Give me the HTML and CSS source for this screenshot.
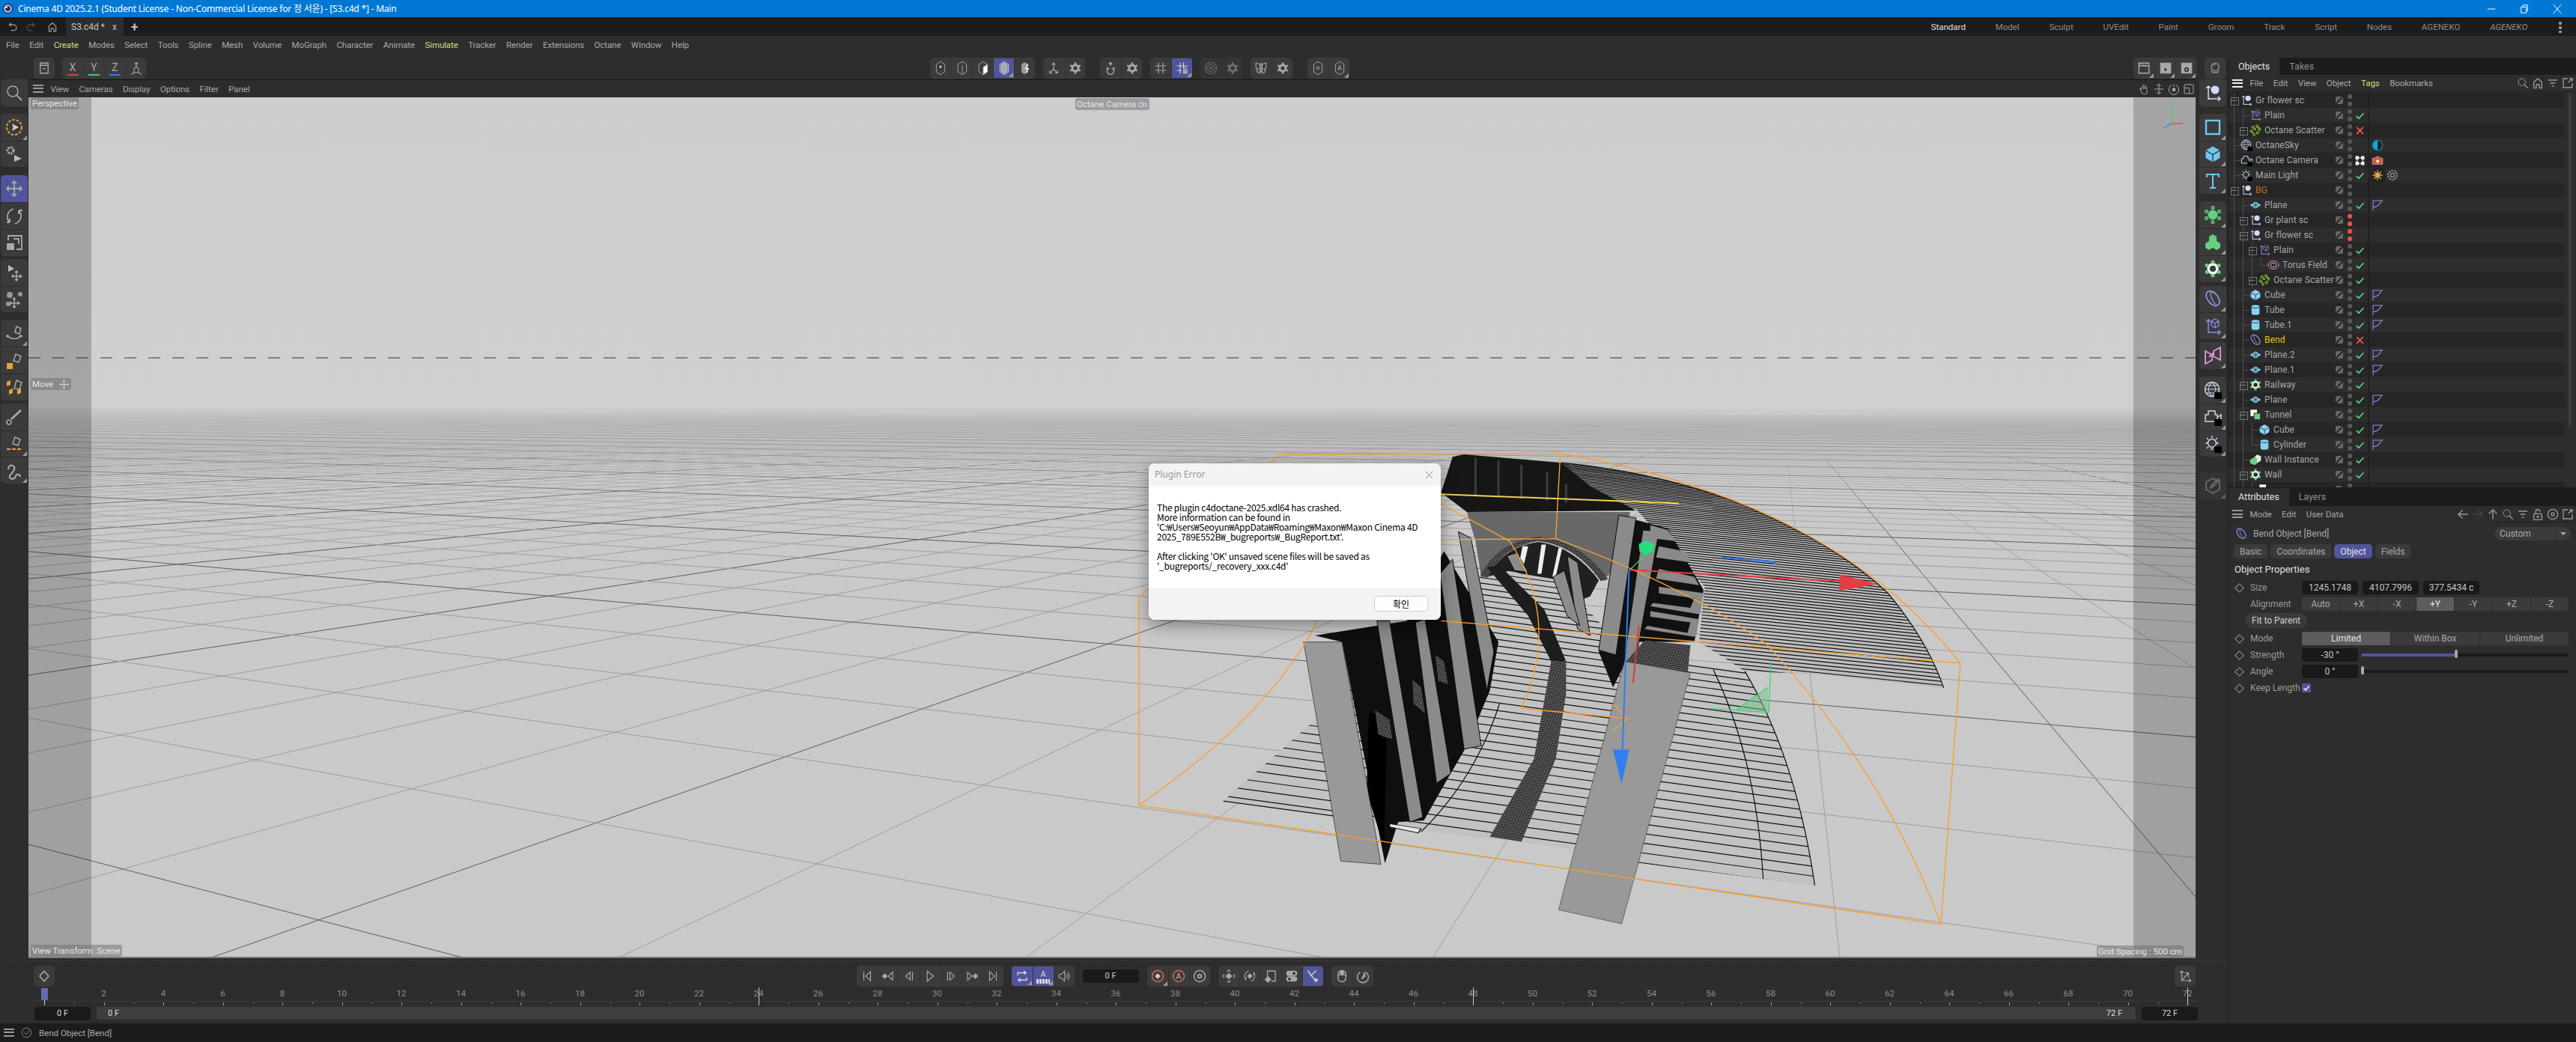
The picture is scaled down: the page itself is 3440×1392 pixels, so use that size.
FILE: index.html
```html
<!DOCTYPE html>
<html lang="en">
<head>
<meta charset="utf-8">
<title>Cinema 4D</title>
<link rel="stylesheet" href="styles.css">
</head>
<body>
<svg class="defs" width="0" height="0" aria-hidden="true">
  <symbol id="null" viewBox="0 0 24 24"><path d="M6 21V3M3 6l3-3 3 3M6 20h16M19 17l3 3-3 3"/><circle cx="15" cy="8" r="5.5" fill="currentColor" stroke="none"/></symbol>
  <symbol id="nullc" viewBox="0 0 24 24"><path d="M6 21V3M3 6l3-3 3 3M6 20h16M19 17l3 3-3 3"/><path d="M15 2l5 3v6l-5 3-5-3V5zM10 5l5 3 5-3M15 8v6" stroke-width="1.2"/></symbol>
  <symbol id="cube" viewBox="0 0 24 24"><path d="M12 1.5l9.5 5.5v10L12 22.5 2.500 17V7z" fill="currentColor" stroke="none"/><path d="M2.500 7L12 12.500 21.500 7M12 12.500V22.500" stroke="#2a2a2a" stroke-width="1.300"/></symbol>
  <symbol id="tube" viewBox="0 0 24 24"><path d="M4 5c0-4 16-4 16 0v14c0 4-16 4-16 0z" fill="currentColor" stroke="none"/><path d="M4 6c2 3 14 3 16 0" stroke="#2a2a2a" stroke-width="1.300"/></symbol>
  <symbol id="plane" viewBox="0 0 24 24"><path d="M12 5L23 12 12 19 1 12z" fill="currentColor" stroke="none"/><path d="M6 9l12 6M18 9L6 15M12 5v14" stroke="#2a2a2a" stroke-width="1.100"/></symbol>
  <symbol id="bend" viewBox="0 0 24 24"><path d="M9 2c6 1 11 7 12 13 1 4-4 8-8 6C8 19 3 12 3 7c0-3 3-6 6-5z" stroke-width="1.800"/><path d="M9 2c-1 5 2 13 7 18" stroke-width="1.400"/></symbol>
  <symbol id="cloner" viewBox="0 0 24 24"><circle cx="12" cy="12" r="6" fill="none" stroke="#fff" stroke-width="3.400"/><g fill="currentColor" stroke="none"><circle cx="12" cy="3" r="2.500"/><circle cx="12" cy="21" r="2.500"/><circle cx="4" cy="7.500" r="2.500"/><circle cx="20" cy="7.500" r="2.500"/><circle cx="4" cy="16.500" r="2.500"/><circle cx="20" cy="16.500" r="2.500"/></g></symbol>
  <symbol id="boole" viewBox="0 0 24 24"><rect x="2" y="2" width="13" height="13" fill="#fff" stroke="none"/><rect x="9" y="9" width="13" height="13" fill="#68d37d" stroke="#2a2a2a" stroke-width="1.400"/></symbol>
  <symbol id="inst" viewBox="0 0 24 24"><path d="M1 12l9-5 5 3v10l-5 3-9-4z" fill="#6ad27f" stroke="none"/><path d="M10 7l5-5 8 3v9l-8 5V10z" fill="#e8e8e8" stroke="none"/></symbol>
  <symbol id="torus" viewBox="0 0 24 24"><ellipse cx="12" cy="12" rx="10.500" ry="8"/><ellipse cx="12" cy="12" rx="6" ry="4"/></symbol>
  <symbol id="scatter" viewBox="0 0 24 24"><g fill="#5e8a2a" stroke="none"><circle cx="7" cy="6" r="3.500"/><circle cx="15" cy="4" r="3.500"/><circle cx="20" cy="10" r="3.500"/><circle cx="4" cy="14" r="3.500"/><circle cx="16" cy="17" r="3.500"/><circle cx="9" cy="21" r="3"/></g><g fill="#a7c24e" stroke="none"><circle cx="11" cy="10" r="2"/><circle cx="18" cy="7" r="1.600"/><circle cx="7" cy="17" r="1.600"/></g></symbol>
  <symbol id="sky" viewBox="0 0 24 24"><circle cx="11" cy="11" r="9.500"/><path d="M1.500 11h19M11 1.500c-6 6-6 13 0 19M11 1.500c6 6 6 13 0 19M3 6h16M3 16h16" stroke-width="1.100"/><rect x="14" y="15" width="10" height="9" rx="1" fill="#000" stroke="none"/></symbol>
  <symbol id="cam" viewBox="0 0 24 24"><path d="M2 18V9h4V4h9v5h3v9zM19 12l4-3v8"/><rect x="14" y="15" width="10" height="9" rx="1" fill="#000" stroke="none"/></symbol>
  <symbol id="light" viewBox="0 0 24 24"><circle cx="11" cy="11" r="5.500"/><path d="M11 1v3M2 11h3M17 11h3M4 4l2 2M18 4l-2 2M4 18l2-2M9 19h4"/><rect x="14" y="15" width="10" height="9" rx="1" fill="#000" stroke="none"/></symbol>
  <symbol id="check" viewBox="0 0 24 24"><path d="M3 13l6 6L21 6" stroke="#55d67d" stroke-width="3.200"/></symbol>
  <symbol id="cross" viewBox="0 0 24 24"><path d="M4 4l16 16M20 4L4 20" stroke="#e2574f" stroke-width="3.600"/></symbol>
  <symbol id="phong" viewBox="0 0 24 24"><path d="M3 23V3h20M3 16C12 16 17 10 20 3" stroke="#8d8fe6" stroke-width="1.600"/></symbol>
  <symbol id="search" viewBox="0 0 24 24"><circle cx="10" cy="10" r="7"/><path d="M15 15l7 7" stroke-width="2"/></symbol>
  <symbol id="home" viewBox="0 0 24 24"><path d="M4 22V10l8-7 8 7v12h-5v-7h-6v7z" stroke-width="2"/></symbol>
  <symbol id="filter" viewBox="0 0 24 24"><path d="M3 6h18M7 12h10M10 18h4" stroke-width="2.400"/></symbol>
  <symbol id="pop" viewBox="0 0 24 24"><path d="M12 3H3v18h18v-9M13 11l8-8M15 3h6v6" stroke-width="2"/></symbol>
  <symbol id="left" viewBox="0 0 24 24"><path d="M22 12H3M11 4l-8 8 8 8" stroke-width="2.200"/></symbol>
  <symbol id="right" viewBox="0 0 24 24"><path d="M2 12h19M13 4l8 8-8 8" stroke-width="2.200"/></symbol>
  <symbol id="up" viewBox="0 0 24 24"><path d="M12 22V3M4 11l8-8 8 8" stroke-width="2.200"/></symbol>
  <symbol id="lock" viewBox="0 0 24 24"><rect x="4" y="11" width="16" height="12" rx="1" stroke-width="2"/><path d="M8 11V6c0-5 8-5 8 0v2" stroke-width="2"/><circle cx="12" cy="17" r="1.800" fill="currentColor"/></symbol>
  <symbol id="target" viewBox="0 0 24 24"><circle cx="12" cy="12" r="10" stroke-width="2"/><circle cx="12" cy="12" r="3" stroke-width="2"/></symbol>
  <symbol id="hex" viewBox="0 0 24 32"><path d="M12 2l9 6v16l-9 6-9-6V8z"/></symbol>
  <symbol id="gear" viewBox="0 0 24 24"><circle cx="12" cy="12" r="5.500" stroke-width="4"/><path d="M12 2v4M12 18v4M3 7l3.500 2M17.500 15l3.500 2M3 17l3.500-2M17.500 9L21 7" stroke-width="3.400"/></symbol>
</svg>

<header class="titlebar">
  <svg class="applogo" viewBox="0 0 24 24"><circle cx="12" cy="12" r="11" fill="#1c2f6e"/><circle cx="12" cy="12" r="7" fill="none" stroke="#c9d3ea" stroke-width="3"/><circle cx="9" cy="9" r="2" fill="#fff"/></svg>
  <span class="title-text">Cinema 4D 2025.2.1 (Student License - Non-Commercial License for 정 서윤) - [S3.c4d *] - Main</span>
  <span class="winbtns">
    <svg viewBox="0 0 16 16"><path d="M2 8h12"/></svg>
    <svg viewBox="0 0 16 16"><path d="M3 5h8v9H3zM6 5V2h7v9h-2"/></svg>
    <svg viewBox="0 0 16 16"><path d="M2 1l12 14M14 1L2 15"/></svg>
  </span>
</header>

<nav class="tabbar">
  <svg class="hist" viewBox="0 0 24 24"><path d="M8 3L4 7l4 4M4 7h10a6 6 0 010 13H8" stroke-width="2"/></svg>
  <svg class="hist dim" viewBox="0 0 24 24"><path d="M16 3l4 4-4 4M20 7H10a6 6 0 000 13h6" stroke-width="2"/></svg>
  <svg class="hist home"><use href="#home"/></svg>
  <span class="doc-tab">S3.c4d * <em>x</em></span>
  <span class="add-tab">+</span>
  <span class="layouts">
    <span class="lay on">Standard</span><span class="lay">Model</span><span class="lay">Sculpt</span><span class="lay">UVEdit</span><span class="lay">Paint</span><span class="lay">Groom</span><span class="lay">Track</span><span class="lay">Script</span><span class="lay">Nodes</span><span class="lay">AGENEKO</span><span class="lay it">AGENEKO</span>
  </span>
  <span class="kebab"></span>
</nav>

<nav class="menubar">
  <span>File</span><span>Edit</span><span class="hl">Create</span><span>Modes</span><span>Select</span><span>Tools</span><span>Spline</span><span>Mesh</span><span>Volume</span><span>MoGraph</span><span>Character</span><span>Animate</span><span class="hl">Simulate</span><span>Tracker</span><span>Render</span><span>Extensions</span><span>Octane</span><span>Window</span><span>Help</span>
</nav>

<main class="workspace">
  <section class="center">
    <div class="toolbar">
      <div class="grp"><span class="b"><svg viewBox="0 0 24 24"><path d="M5 3h14v18H5zM5 7h14M10 13h4" stroke-width="1.800"/></svg></span></div>
      <div class="grp">
        <span class="b axis"><b>X</b><i class="ax-x"></i></span>
        <span class="b axis"><b>Y</b><i class="ax-y"></i></span>
        <span class="b axis"><b>Z</b><i class="ax-z"></i></span>
        <span class="b"><svg viewBox="0 0 24 24"><path d="M12 2v8M9 5l3-3 3 3M8 13l4-4 4 4v7H8zM8 20l-5 3M16 20l5 3"/></svg></span>
      </div>
      <div class="tb-mid">
        <div class="grp">
          <span class="b"><svg viewBox="0 0 24 32"><use href="#hex"/><circle cx="12" cy="13" r="2" fill="#fff" stroke="none"/></svg></span>
          <span class="b"><svg viewBox="0 0 24 32"><use href="#hex"/><path d="M12 10v18"/></svg></span>
          <span class="b"><svg viewBox="0 0 24 32"><use href="#hex"/><path d="M21 8v16l-9 6V14z" fill="#fff"/></svg></span>
          <span class="b on tri"><svg viewBox="0 0 24 32"><use href="#hex"/><path d="M12 5l6 4v14l-6 4-6-4V9z" fill="#aaa"/></svg></span>
          <span class="b"><svg viewBox="0 0 24 32"><path d="M10 3l8 4v18l-8 4-6-5V8z" fill="#999" stroke="none"/><path d="M18 8l-5 9h6l-5 9" stroke="#fff" stroke-width="2"/></svg></span>
        </div>
        <div class="grp">
          <span class="b"><svg viewBox="0 0 24 24"><path d="M12 3v11M12 14l-7 7M12 14l7 7M9 6l3-3 3 3M5 16v5h5M19 16v5h-5"/></svg></span>
          <span class="b"><svg viewBox="0 0 24 24"><use href="#gear"/></svg></span>
        </div>
        <div class="grp g-gap">
          <span class="b"><svg viewBox="0 0 24 24"><path d="M6 10v7a6 6 0 0012 0v-7M6 13h4M14 13h4M12 2v6M9 5l3-3 3 3" stroke-width="2"/></svg></span>
          <span class="b"><svg viewBox="0 0 24 24"><use href="#gear"/></svg></span>
        </div>
        <div class="grp">
          <span class="b"><svg viewBox="0 0 24 24"><path d="M8 2v20M16 2v20M2 8h20M2 16h20"/></svg></span>
          <span class="b on tri"><svg viewBox="0 0 24 24"><path d="M8 2v20M14 2v11M2 8h20M2 16h8"/><rect x="13" y="15" width="8" height="7" fill="#aaa" stroke="none"/><path d="M15 15v-2a2 2 0 014 0v2" stroke-width="1.300"/></svg></span>
        </div>
        <div class="grp off">
          <span class="b"><svg viewBox="0 0 24 24"><circle cx="12" cy="12" r="10"/><circle cx="12" cy="12" r="6"/><circle cx="12" cy="12" r="2"/></svg></span>
          <span class="b"><svg viewBox="0 0 24 24"><use href="#gear"/></svg></span>
        </div>
        <div class="grp">
          <span class="b"><svg viewBox="0 0 24 24"><path d="M12 2v20M10 5L3 3v9l4 1-3 3 3 5 3-2zM14 5l7-2v9l-4 1 3 3-3 5-3-2z"/></svg></span>
          <span class="b"><svg viewBox="0 0 24 24"><use href="#gear"/></svg></span>
        </div>
        <div class="grp g-gap">
          <span class="b"><svg viewBox="0 0 24 32"><use href="#hex"/><circle cx="12" cy="16" r="3"/></svg></span>
          <span class="b tri"><svg viewBox="0 0 24 32"><use href="#hex"/><path d="M8 21l4-11 4 11M9.500 17h5"/></svg></span>
        </div>
      </div>
      <div class="tb-right">
        <div class="grp">
          <span class="b tri"><svg viewBox="0 0 24 24"><path d="M3 8h18v13H3zM3 3h18v5H3z" stroke-width="1.800"/><path d="M6 3l-1 5M11 3l-1 5M16 3l-1 5" /></svg></span>
          <span class="b tri"><svg viewBox="0 0 24 24"><path d="M3 8h18v13H3zM3 3h18v5H3z" fill="#aaa"/><path d="M10 11l5 3.500-5 3.500z" fill="#333" stroke="none"/></svg></span>
          <span class="b tri"><svg viewBox="0 0 24 24"><path d="M3 8h18v13H3zM3 3h18v5H3z" fill="#aaa"/><circle cx="12" cy="14.500" r="3" stroke="#333" stroke-width="2.400"/></svg></span>
        </div>
        <div class="grp"><span class="b"><svg viewBox="0 0 24 24"><circle cx="12" cy="10" r="7"/><path d="M9 8a4 4 0 014-3M5 17c2 4 12 4 14 0"/></svg></span></div>
      </div>
    </div>

    <div class="vp-row">
      <aside class="palette tools">
        <div class="pg"><span class="p"><svg viewBox="0 0 24 24"><use href="#search"/></svg></span></div>
        <div class="pg">
          <span class="p tri"><svg viewBox="0 0 24 24"><circle cx="12" cy="12" r="10" stroke="#e6a23c" stroke-width="2" stroke-dasharray="3.500 2"/><path d="M9 7l9 5-9 5 1.500-5z" fill="#ccc" stroke="none"/></svg></span>
          <span class="p"><svg viewBox="0 0 24 24"><circle cx="7" cy="7" r="4" stroke-width="3" stroke-dasharray="2.500 1.200"/><path d="M12 13l10 5-10 4z" fill="#bbb" stroke="none"/></svg></span>
        </div>
        <div class="pg gap11">
          <span class="p on"><svg viewBox="0 0 24 24"><path d="M12 2v20M2 12h20M9 5l3-3 3 3M9 19l3 3 3-3M5 9l-3 3 3 3M19 9l3 3-3 3" stroke-width="1.800"/></svg></span>
          <span class="p"><svg viewBox="0 0 24 24"><path d="M18 4a10 10 0 013 8c0 5-4 9-8 10M18 4v5M18 4h5M6 20a10 10 0 01-3-8c0-5 4-9 8-10M6 20v-5M6 20H2" stroke-width="1.800"/></svg></span>
          <span class="p"><svg viewBox="0 0 24 24"><path d="M4 9V3h18v18h-7M11 7h7v7" stroke-width="1.800"/><rect x="2" y="13" width="10" height="9" rx="1" fill="#aaa" stroke="none"/></svg></span>
        </div>
        <div class="pg gap4">
          <span class="p"><svg viewBox="0 0 24 24"><path d="M4 2l8 5-8 4z" fill="#bbb" stroke="none"/><path d="M15 10v13M9 17h13M13 12l2-2 2 2M13 21l2 2 2-2M11 15l-2 2 2 2M19 15l3 2-3 2"/></svg></span>
          <span class="p"><svg viewBox="0 0 24 24"><path d="M12 10v13M6 17h13M10 12l2-2 2 2M10 21l2 2 2-2M8 15l-2 2 2 2M16 15l3 2-3 2"/><g fill="#999" stroke="none"><circle cx="6" cy="6" r="4"/><circle cx="20" cy="5" r="3"/><circle cx="4" cy="18" r="3"/></g></svg></span>
        </div>
        <div class="pg">
          <span class="p tri"><svg viewBox="0 0 24 24"><path d="M13 11l2-8 6 3-2 7zM3 15c4 6 14 6 18 0"/><circle cx="3" cy="16" r="1.800" fill="#e6a23c" stroke="none"/><circle cx="21" cy="16" r="1.800" fill="#e6a23c" stroke="none"/></svg></span>
          <span class="p"><svg viewBox="0 0 24 24"><path d="M11 12l3-9 7 3-3 8z"/><rect x="2" y="15" width="8" height="8" fill="#e6a23c" stroke="none"/></svg></span>
          <span class="p"><svg viewBox="0 0 24 24"><path d="M12 14l3-11 7 3-3 9z"/><g fill="#e6a23c" stroke="none"><path d="M2 5l5-2v6l-5 2z"/><path d="M5 16l5-2v6l-5 2z"/><path d="M16 16l5-2v6l-5 2z"/></g></svg></span>
        </div>
        <div class="pg gap4">
          <span class="p"><svg viewBox="0 0 24 24"><path d="M21 3L8 15" stroke-width="3"/><circle cx="5" cy="19" r="3" stroke-width="1.600"/></svg></span>
          <span class="p tri"><svg viewBox="0 0 24 24"><path d="M10 12l3-9 7 3-3 8z"/><path d="M2 19h20" stroke="#e6a23c" stroke-width="2" stroke-dasharray="5 2"/></svg></span>
          <span class="p tri"><svg viewBox="0 0 24 24"><path d="M4 10c0-8 10-6 8 0s-8 8-6 11 7 2 8-2 6-2 6 1" stroke-width="2.200"/></svg></span>
        </div>
      </aside>

      <div class="viewcol">
        <div class="vp-menu">
          <span class="burger"></span>
          <span>View</span><span>Cameras</span><span>Display</span><span>Options</span><span>Filter</span><span>Panel</span>
          <span class="vp-nav">
            <svg viewBox="0 0 24 24"><path d="M7 13V7M11 12V3M14 12V4M17 13V6M7 13l-3-2 4 9c2 3 8 3 10 0 1-2 0-5 0-7"/></svg>
            <svg viewBox="0 0 24 24"><path d="M12 2v20M8 6l4-4 4 4M8 18l4 4 4-4M3 12h18"/></svg>
            <svg viewBox="0 0 24 24"><path d="M16 4a10 10 0 11-8 0"/><circle cx="12" cy="13" r="3" fill="currentColor"/><path d="M12 2v5"/></svg>
            <svg viewBox="0 0 24 24"><rect x="3" y="3" width="18" height="18" rx="1"/><path d="M3 10h10v11"/></svg>
          </span>
        </div>
        <div class="viewport">
          <svg class="scene" viewBox="38 130 2894 1151" preserveAspectRatio="none">
            <defs>
              <linearGradient id="sky-g" x1="0" y1="0" x2="0" y2="1">
                <stop offset="0" stop-color="#cdcdcd"/><stop offset="1" stop-color="#d0d0d0"/>
              </linearGradient>
              <linearGradient id="fade" gradientUnits="userSpaceOnUse" x1="0" y1="545" x2="0" y2="760">
                <stop offset="0" stop-color="#d0d0d0"/><stop offset=".2" stop-color="#bcbcbc"/><stop offset="1" stop-color="#9c9c9c"/>
              </linearGradient>
              <linearGradient id="fade-dark" gradientUnits="userSpaceOnUse" x1="0" y1="545" x2="0" y2="720">
                <stop offset="0" stop-color="#cecece"/><stop offset=".2" stop-color="#a2a2a2"/><stop offset="1" stop-color="#5c5c5c"/>
              </linearGradient>
              <pattern id="hatch" width="5" height="6" patternUnits="userSpaceOnUse" patternTransform="rotate(14)">
                <rect width="5" height="6" fill="#262626"/><path d="M0 3h5M2.500 0v6" stroke="#8c8c8c" stroke-width=".9"/>
              </pattern>
              <clipPath id="fan-a"><path d="M620,185L830,88Q1010,120 1150,220Q1310,340 1400,490Q1470,640 1497,782L1280,740L1150,730L1070,640L1080,470L960,230Z"/></clipPath>
              <clipPath id="fan-b"><path d="M240,1130L400,880L700,420L800,400L950,680L1150,730Q1240,1000 1272,1390L960,1320L820,1270L600,1225L520,1200Z"/></clipPath>
            </defs>
            <rect x="38" y="130" width="2894" height="415" fill="url(#sky-g)"/>
            <rect x="38" y="545" width="2894" height="736" fill="#c9c9c9"/>
            <g id="grid"></g>
            <path class="horizon" d="M38 478h2894"/>
            <g transform="translate(1450 580) scale(.7653 .4337)">
              <path d="M620,185L830,88Q1010,120 1150,220Q1310,340 1400,490Q1470,640 1497,782L1280,740L1150,730L1070,640L1080,470L960,230Z" fill="#bdbdbd"/>
              <path d="M240,1130L400,880L700,420L800,400L950,680L1150,730Q1240,1000 1272,1390L960,1320L820,1270L600,1225L520,1200Z" fill="#c2c2c2"/>
              <g id="stripes-a" clip-path="url(#fan-a)"></g>
              <g id="stripes-b" clip-path="url(#fan-b)"></g>
              <path class="edge" d="M830,88Q1010,120 1150,220Q1310,340 1400,490Q1470,640 1497,782M1150,730Q1240,1000 1272,1390M1095,725Q1170,1000 1182,1370M722,830Q680,1060 585,1225M240,1130L450,1180"/>

              <!-- far stair of the arcade -->
              <path d="M640,70L660,62L830,88L880,160L960,235L665,240L620,180Z" fill="#161616"/>
              <path class="steps" d="M680,72V190M720,80V196M760,95V200M805,115V205M838,152V212"/>
              <!-- arch wall -->
              <path d="M665,240L950,240L925,400L905,450Q860,335 790,318Q720,345 690,440L680,330Z" fill="#686868"/>
              <path d="M700,440Q730,345 790,332Q850,345 895,450L880,500L850,520L830,450L760,430L740,420Z" fill="#202020"/>
              <path d="M762,345L772,345L762,420L754,418Z M795,340L803,340L795,430L788,430Z M825,350L831,352L820,440L814,440Z" fill="#eee"/>
              <path class="col" d="M735,375L752,365L772,425L748,420Z"/>
              <path class="col" d="M840,375L858,395L880,620L858,600Z"/>
              <path class="col" d="M815,440L835,420L862,590L840,560Z"/>
              <path d="M695,440Q720,340 790,322Q860,335 905,450" fill="none" stroke="url(#hatch)" stroke-width="14"/>
              <!-- rail track -->
              <path d="M700,410L722,405L800,540L838,700L812,700L772,560Z" fill="#1d1d1d"/>
              <path d="M705,1240L760,1255L820,1000L838,800L838,700L812,700L802,800L782,1000Z" fill="url(#hatch)"/>
              <!-- left wall -->
              <path d="M400,620L560,575L625,360L720,640L705,790L665,960L630,1065L590,1190L545,1195L522,1322L447,640Z" fill="#0f0f0f"/>
              <path class="col" d="M508,575L530,575L588,1180L565,1195Z"/>
              <path class="col" d="M575,580L592,570L637,1045L612,1075Z"/>
              <path class="col" d="M618,430L640,385L690,960L660,970Z"/>
              <path class="col" d="M650,300L672,320L712,670L700,790Z"/>
              <path d="M494,860Q520,850 525,960L520,1270L490,1100Z" fill="#000"/>
              <path d="M505,850L530,880L535,940L510,925Z M570,755L585,780L592,860L572,830Z M610,680L625,700L632,770L615,760Z" fill="url(#hatch)"/>
              <path d="M530,1200L585,1215L580,1228L530,1210Z" fill="#e6e6e6" stroke="#111" stroke-width="2"/>
              <path d="M380,640L447,640L515,1325L445,1315Z" fill="#999" stroke="#111" stroke-width="1"/>
              <!-- right wall -->
              <path d="M930,250L1015,290L1078,480L1062,640L960,640L920,780L895,670Z" fill="#111"/>
              <path class="col" d="M930,250L960,258L925,680L895,665Z"/>
              <path class="col" d="M972,295L1000,300L960,690L935,755Z"/>
              <path class="col2" d="M985,280L1015,295L1030,330L985,320Z"/>
              <path class="col2" d="M1000,345L1048,362L1055,395L995,380Z"/>
              <path class="col2" d="M1000,415L1062,440L1070,465L995,445Z"/>
              <path class="col2" d="M1000,470L1078,490L1072,555L985,530L990,520L1055,535L1062,505L1000,490Z"/>
              <path class="col2" d="M985,545L1070,570L1065,625L975,600L980,590L1050,612L1055,580L985,562Z"/>
              <path d="M975,635L1055,650L1050,740L940,705Z" fill="url(#hatch)"/>
              <path d="M940,700L1055,735L935,1508L825,1465Z" fill="#999" stroke="#333" stroke-width="1"/>
              <!-- selection box -->
              <path class="sel" d="M338,62L828,60M338,62L93,505L93,1143L1492,1510L1526,705M828,60Q1300,200 1526,705M1492,1510Q1400,1060 1190,650Q1050,470 820,322L828,60M820,322L620,325M620,215L740,330Q830,580 760,845L945,875M620,575L1526,705M405,570Q330,850 93,1143M920,830L945,878L920,912"/>
              <path d="M620,185L1035,213" stroke="#f2cf52" stroke-width="2" vector-effect="non-scaling-stroke"/>
              <!-- gizmo -->
              <path d="M1190,780L1135,850L1192,857Z" fill="#79c28d" fill-opacity=".55"/>
              <path class="thin-g" d="M1195,700L1192,857M1190,780L1135,850M1090,845L1192,857"/>
              <path class="thin-g" d="M980,365L948,420"/>
              <path d="M1110,380L1200,393" stroke="#3a7fe0" stroke-width="2.200" vector-effect="non-scaling-stroke"/>
              <path d="M1175,388L1205,393L1205,402Z" fill="#3a7fe0"/>
              <path d="M950,418L1330,455" stroke="#e43e44" stroke-width="2" vector-effect="non-scaling-stroke"/>
              <path d="M1315,432L1382,462L1315,482Z" fill="#e43e44"/>
              <path d="M965,590L955,765" stroke="#d63b3b" stroke-width="2" vector-effect="non-scaling-stroke"/>
              <path d="M948,418L936,990" stroke="#2f7fee" stroke-width="2" vector-effect="non-scaling-stroke"/>
              <path d="M920,972H948L935,1078Z" fill="#2f7fee"/>
              <path d="M978,328L992,338L990,360L978,372L966,360L965,338Z" fill="#23e07a"/>
            </g>
            <path class="band" d="M38 130h84v1151H38zM2849 130h83v1151h-83z"/>
            <path class="mini-y" d="M2900 141v24"/>
            <path class="mini-x" d="M2900 165h15"/>
            <path class="mini-z" d="M2900 165l-11 6"/>
          </svg>
          <span class="hud hud-persp">Perspective</span>
          <span class="hud hud-cam">Octane Camera <svg viewBox="0 0 24 16"><path d="M2 13V4h10v9zM12 8l8-4v9l-8-3" fill="#8fa0c8"/></svg></span>
          <span class="hud hud-move">Move <svg viewBox="0 0 24 24"><path d="M12 2v20M2 12h20M9 5l3-3 3 3M9 19l3 3 3-3M5 9l-3 3 3 3M19 9l3 3-3 3"/></svg></span>
          <span class="hud hud-trans">View Transform: Scene</span>
          <span class="hud hud-grid">Grid Spacing : 500 cm</span>

          <div class="dialog">
            <div class="dlg-head"><span>Plugin Error</span><svg viewBox="0 0 12 12"><path d="M1 1l10 10M11 1L1 11"/></svg></div>
            <div class="dlg-body">
              <p>The plugin c4doctane-2025.xdl64 has crashed.<br>More information can be found in<br>'C:₩Users₩Seoyun₩AppData₩Roaming₩Maxon₩Maxon Cinema 4D<br>2025_789E552B₩_bugreports₩_BugReport.txt'.</p>
              <p>After clicking 'OK' unsaved scene files will be saved as<br>'_bugreports/_recovery_xxx.c4d'</p>
            </div>
            <div class="dlg-foot"><span class="dlg-btn">확인</span></div>
          </div>
        </div>
      </div>

      <aside class="palette right">
        <div class="pg"><span class="p big lav"><svg viewBox="0 0 24 24"><use href="#null"/></svg></span></div>
        <div class="pg">
          <span class="p big tri sky"><svg viewBox="0 0 24 24"><rect x="3" y="3" width="18" height="18" stroke-width="2.400"/></svg></span>
          <span class="p big tri sky"><svg viewBox="0 0 24 24"><use href="#cube"/></svg></span>
          <span class="p big tri sky"><svg viewBox="0 0 24 24"><path d="M4 7V3h16v4M12 3v18M8 21h8" stroke-width="2"/></svg></span>
        </div>
        <div class="pg">
          <span class="p big tri grn"><svg viewBox="0 0 24 24"><circle cx="12" cy="12" r="6.500" fill="currentColor" stroke="none"/><path d="M2 6h3v3H2zM19 6h3v3h-3zM2 15h3v3H2zM19 15h3v3h-3zM10.500 1h3v3h-3zM10.500 20h3v3h-3z" stroke-width="1.500"/></svg></span>
          <span class="p big tri grn"><svg viewBox="0 0 24 24"><path d="M12 2l5 3v6l5 3v6l-5 3-5-3-5 3-5-3v-6l5-3V5z" fill="currentColor" stroke="none"/></svg></span>
          <span class="p big tri grn"><svg viewBox="0 0 24 24"><use href="#cloner"/></svg></span>
        </div>
        <div class="pg gap5">
          <span class="p big tri pur"><svg viewBox="0 0 24 24"><use href="#bend"/></svg></span>
          <span class="p big tri pur"><svg viewBox="0 0 24 24"><use href="#nullc"/></svg></span>
        </div>
        <div class="pg gap4"><span class="p big tri pnk"><svg viewBox="0 0 24 24"><path d="M2 6l9 5v7l-9 5zM22 1l-9 5v7l9 5zM7 14l6-6" stroke-width="1.800"/></svg></span></div>
        <div class="pg">
          <span class="p big tri lt"><svg viewBox="0 0 24 24"><use href="#sky"/></svg></span>
          <span class="p big tri lt"><svg viewBox="0 0 24 24"><use href="#cam"/></svg></span>
          <span class="p big tri lt"><svg viewBox="0 0 24 24"><use href="#light"/></svg></span>
        </div>
        <div class="pg gap21 dimg"><span class="p big tri"><svg viewBox="0 0 24 24"><path d="M12 2l9 5v10l-9 5-9-5V7zM9 15l1-4 9-8 2 2-9 8z" stroke-width="1.800"/></svg></span></div>
      </aside>
    </div>

    <div class="timeline">
      <div class="tl-controls">
        <div class="grp"><span class="b"><svg viewBox="0 0 24 24"><path d="M12 3l8 9-8 9-8-9z" stroke-width="2"/></svg></span></div>
        <div class="tl-mid">
          <div class="grp">
            <span class="b"><svg viewBox="0 0 24 24"><path d="M6 4v16M18 4L9 12l9 8z"/></svg></span>
            <span class="b"><svg viewBox="0 0 24 24"><path d="M6 8l4 4-4 4-4-4z" fill="currentColor"/><path d="M20 5l-8 7 8 7z"/></svg></span>
            <span class="b"><svg viewBox="0 0 24 24"><path d="M14 5l-8 7 8 7zM18 4v16"/></svg></span>
            <span class="b"><svg viewBox="0 0 24 24"><path d="M7 3l11 9-11 9z"/></svg></span>
            <span class="b"><svg viewBox="0 0 24 24"><path d="M6 4v16M10 5l8 7-8 7z"/></svg></span>
            <span class="b"><svg viewBox="0 0 24 24"><path d="M4 5l8 7-8 7z"/><path d="M18 8l4 4-4 4-4-4z" fill="currentColor"/></svg></span>
            <span class="b"><svg viewBox="0 0 24 24"><path d="M6 4l9 8-9 8zM18 4v16"/></svg></span>
          </div>
          <div class="grp">
            <span class="b on tri"><svg viewBox="0 0 24 24"><path d="M4 11V6h14M15 3l4 3-4 3M20 14v5H6M9 16l-4 3 4 3" stroke-width="1.800"/></svg></span>
            <span class="b on tri axis2"><b>A</b><i></i></span>
            <span class="b"><svg viewBox="0 0 24 24"><path d="M3 9h4l6-6v18l-6-6H3zM16 8c2 3 2 5 0 8M19 5c3 5 3 9 0 14"/></svg></span>
          </div>
          <span class="frame">0 F</span>
          <div class="grp">
            <span class="b tri"><svg viewBox="0 0 24 24"><circle cx="12" cy="12" r="10" stroke="#e0645c" stroke-width="2"/><path d="M12 7l5 5-5 5-5-5z" fill="#ccc" stroke="none"/></svg></span>
            <span class="b"><svg viewBox="0 0 24 24"><circle cx="12" cy="12" r="10" stroke="#e0645c" stroke-width="2"/><path d="M8 17l4-10 4 10M9 14h6"/></svg></span>
            <span class="b"><svg viewBox="0 0 24 24"><circle cx="12" cy="12" r="10" stroke-width="2"/><use href="#gear" x="6" y="6" width="12" height="12"/></svg></span>
          </div>
          <div class="grp">
            <span class="b"><svg viewBox="0 0 24 24"><path d="M12 7l5 5-5 5-5-5z" fill="currentColor"/><path d="M12 1l3 3M12 1L9 4M12 23l3-3M12 23l-3-3M1 12l3-3M1 12l3 3M23 12l-3-3M23 12l-3 3"/></svg></span>
            <span class="b"><svg viewBox="0 0 24 24"><path d="M12 8l4 4-4 4-4-4z" fill="currentColor"/><path d="M19 5c4 6 2 14-5 16M19 5v5M5 19C1 13 3 5 10 3M5 19v-5"/></svg></span>
            <span class="b"><svg viewBox="0 0 24 24"><path d="M6 16V3h14v18h-7" stroke-width="1.800"/><path d="M7 13l5 5-5 5-5-5z" fill="currentColor"/></svg></span>
            <span class="b"><svg viewBox="0 0 24 24"><rect x="3" y="3" width="18" height="8" rx="4" fill="currentColor"/><rect x="3" y="13" width="18" height="8" rx="4" fill="currentColor"/><circle cx="16" cy="7" r="2.500" fill="#333" stroke="none"/><circle cx="8" cy="17" r="2.500" fill="#333" stroke="none"/></svg></span>
            <span class="b on"><svg viewBox="0 0 24 24"><path d="M3 2l15 20M18 2L8 12" stroke="#ccc" stroke-width="2"/><circle cx="18" cy="19" r="3" fill="#ccc" stroke="none"/></svg></span>
          </div>
          <div class="grp">
            <span class="b"><svg viewBox="0 0 24 24"><rect x="5" y="2" width="14" height="20" rx="7" stroke-width="2"/><path d="M5 10h14" /><rect x="9" y="3" width="6" height="7" rx="2" fill="currentColor"/></svg></span>
            <span class="b"><svg viewBox="0 0 24 24"><path d="M17 5a10 10 0 11-10 0" stroke-width="2"/><path d="M15 6l-5 11 6-5z" fill="currentColor"/></svg></span>
          </div>
        </div>
        <div class="grp"><span class="b"><svg viewBox="0 0 24 24"><path d="M6 3v17h16M3 6l3-3 3 3M19 17l3 3-3 3M6 20L18 6M11 6h7v8" stroke-width="1.600"/></svg></span></div>
      </div>
      <div class="ruler">
        <span>0</span><span>2</span><span>4</span><span>6</span><span>8</span><span>10</span><span>12</span><span>14</span><span>16</span><span>18</span><span>20</span><span>22</span><span>24</span><span>26</span><span>28</span><span>30</span><span>32</span><span>34</span><span>36</span><span>38</span><span>40</span><span>42</span><span>44</span><span>46</span><span>48</span><span>50</span><span>52</span><span>54</span><span>56</span><span>58</span><span>60</span><span>62</span><span>64</span><span>66</span><span>68</span><span>70</span><span>72</span>
        <i class="head"></i><i class="mark m0"></i><i class="mark m24"></i><i class="mark m48"></i><i class="mark m72"></i>
      </div>
      <div class="range">
        <span class="frame small">0 F</span>
        <div class="range-bar"><span>0 F</span><span>72 F</span></div>
        <span class="frame small">72 F</span>
      </div>
    </div>
  </section>

  <section class="side">
    <div class="panel objects">
      <div class="ptabs"><span class="ptab on">Objects</span><span class="ptab">Takes</span></div>
      <div class="pmenu">
        <span class="burger wh"></span>
        <span>File</span><span>Edit</span><span>View</span><span>Object</span><span class="hl">Tags</span><span>Bookmarks</span>
        <span class="picons"><svg><use href="#search"/></svg><svg><use href="#home"/></svg><svg><use href="#filter"/></svg><svg><use href="#pop"/></svg></span>
      </div>
      <div class="tree">
        <div class="rows">
          <div class="row"><div class="nc"><i class="x minus"></i><svg class="ti lav"><use href="#null"/></svg><span class="nm">Gr flower sc</span><div class="fl"><i class="ed"></i><i class="dots"></i><i class="st"></i></div></div></div>
          <div class="row"><div class="nc"><i class="g"></i><i class="x tee"></i><svg class="ti pur"><use href="#nullc"/></svg><span class="nm">Plain</span><div class="fl"><i class="ed"></i><i class="dots"></i><svg class="st"><use href="#check"/></svg></div></div></div>
          <div class="row"><div class="nc"><i class="g"></i><i class="x plus"></i><svg class="ti"><use href="#scatter"/></svg><span class="nm">Octane Scatter</span><div class="fl"><i class="ed"></i><i class="dots"></i><svg class="st"><use href="#cross"/></svg></div></div></div>
          <div class="row"><div class="nc"><i class="x tee"></i><svg class="ti lt"><use href="#sky"/></svg><span class="nm">OctaneSky</span><div class="fl"><i class="ed"></i><i class="dots"></i><i class="st"></i></div></div><div class="tc"><i class="t-half"></i></div></div>
          <div class="row"><div class="nc"><i class="x tee"></i><svg class="ti lt"><use href="#cam"/></svg><span class="nm">Octane Camera</span><div class="fl"><i class="ed"></i><i class="dots"></i><svg class="st" viewBox="0 0 24 24"><path d="M2 2h6v6H2zM16 2h6v6h-6zM2 16h6v6H2zM16 16h6v6h-6zM8 5h8M8 19h8M5 8v8M19 8v8" fill="#fff" stroke="#fff" stroke-width="2"/></svg></div></div><div class="tc"><svg class="tg" viewBox="0 0 24 24"><path d="M2 8h5l2-3h6l2 3h5v12H2z" fill="#ee4a2a"/><circle cx="12" cy="14" r="3" fill="#fff"/></svg></div></div>
          <div class="row"><div class="nc"><i class="x tee"></i><svg class="ti lt"><use href="#light"/></svg><span class="nm">Main Light</span><div class="fl"><i class="ed"></i><i class="dots"></i><svg class="st"><use href="#check"/></svg></div></div><div class="tc"><svg class="tg boxed" viewBox="0 0 24 24"><circle cx="12" cy="12" r="5" fill="#f6a21e"/><path d="M12 2v4M12 18v4M2 12h4M18 12h4M5 5l3 3M16 16l3 3M19 5l-3 3M8 16l-3 3" stroke="#f6a21e" stroke-width="2"/></svg><svg class="tg" viewBox="0 0 24 24"><circle cx="12" cy="12" r="4" fill="none" stroke="#999" stroke-width="2"/><circle cx="12" cy="12" r="9" fill="none" stroke="#999" stroke-width="2.600" stroke-dasharray="4 1.500"/></svg></div></div>
          <div class="row"><div class="nc"><i class="x minus"></i><svg class="ti lav"><use href="#null"/></svg><span class="nm or">BG</span><div class="fl"><i class="ed"></i><i class="dots"></i><i class="st"></i></div></div></div>
          <div class="row"><div class="nc"><i class="g"></i><i class="x tee"></i><svg class="ti cy"><use href="#plane"/></svg><span class="nm">Plane</span><div class="fl"><i class="ed"></i><i class="dots"></i><svg class="st"><use href="#check"/></svg></div></div><div class="tc"><svg class="tg"><use href="#phong"/></svg></div></div>
          <div class="row"><div class="nc"><i class="g"></i><i class="x plus"></i><svg class="ti lav"><use href="#null"/></svg><span class="nm">Gr plant sc</span><div class="fl"><i class="ed"></i><i class="dots red"></i><i class="st"></i></div></div></div>
          <div class="row"><div class="nc"><i class="g"></i><i class="x minus"></i><svg class="ti lav"><use href="#null"/></svg><span class="nm">Gr flower sc</span><div class="fl"><i class="ed"></i><i class="dots red"></i><i class="st"></i></div></div></div>
          <div class="row"><div class="nc"><i class="g"></i><i class="g"></i><i class="x minus"></i><svg class="ti pur"><use href="#nullc"/></svg><span class="nm">Plain</span><div class="fl"><i class="ed"></i><i class="dots"></i><svg class="st"><use href="#check"/></svg></div></div></div>
          <div class="row"><div class="nc"><i class="g"></i><i class="g"></i><i class="g"></i><i class="x corner"></i><svg class="ti pnk"><use href="#torus"/></svg><span class="nm">Torus Field</span><div class="fl"><i class="ed"></i><i class="dots"></i><svg class="st"><use href="#check"/></svg></div></div></div>
          <div class="row"><div class="nc"><i class="g"></i><i class="g"></i><i class="x plus"></i><svg class="ti"><use href="#scatter"/></svg><span class="nm">Octane Scatter</span><div class="fl"><i class="ed"></i><i class="dots"></i><svg class="st"><use href="#check"/></svg></div></div></div>
          <div class="row"><div class="nc"><i class="g"></i><i class="x tee"></i><svg class="ti cy"><use href="#cube"/></svg><span class="nm">Cube</span><div class="fl"><i class="ed"></i><i class="dots"></i><svg class="st"><use href="#check"/></svg></div></div><div class="tc"><svg class="tg"><use href="#phong"/></svg></div></div>
          <div class="row"><div class="nc"><i class="g"></i><i class="x tee"></i><svg class="ti cy"><use href="#tube"/></svg><span class="nm">Tube</span><div class="fl"><i class="ed"></i><i class="dots"></i><svg class="st"><use href="#check"/></svg></div></div><div class="tc"><svg class="tg"><use href="#phong"/></svg></div></div>
          <div class="row"><div class="nc"><i class="g"></i><i class="x tee"></i><svg class="ti cy"><use href="#tube"/></svg><span class="nm">Tube.1</span><div class="fl"><i class="ed"></i><i class="dots"></i><svg class="st"><use href="#check"/></svg></div></div><div class="tc"><svg class="tg"><use href="#phong"/></svg></div></div>
          <div class="row"><div class="nc"><i class="g"></i><i class="x tee"></i><svg class="ti pur"><use href="#bend"/></svg><span class="nm ye">Bend</span><div class="fl"><i class="ed"></i><i class="dots"></i><svg class="st"><use href="#cross"/></svg></div></div></div>
          <div class="row"><div class="nc"><i class="g"></i><i class="x tee"></i><svg class="ti cy"><use href="#plane"/></svg><span class="nm">Plane.2</span><div class="fl"><i class="ed"></i><i class="dots"></i><svg class="st"><use href="#check"/></svg></div></div><div class="tc"><svg class="tg"><use href="#phong"/></svg></div></div>
          <div class="row"><div class="nc"><i class="g"></i><i class="x tee"></i><svg class="ti cy"><use href="#plane"/></svg><span class="nm">Plane.1</span><div class="fl"><i class="ed"></i><i class="dots"></i><svg class="st"><use href="#check"/></svg></div></div><div class="tc"><svg class="tg"><use href="#phong"/></svg></div></div>
          <div class="row"><div class="nc"><i class="g"></i><i class="x plus"></i><svg class="ti gn"><use href="#cloner"/></svg><span class="nm">Railway</span><div class="fl"><i class="ed"></i><i class="dots"></i><svg class="st"><use href="#check"/></svg></div></div></div>
          <div class="row"><div class="nc"><i class="g"></i><i class="x tee"></i><svg class="ti cy"><use href="#plane"/></svg><span class="nm">Plane</span><div class="fl"><i class="ed"></i><i class="dots"></i><svg class="st"><use href="#check"/></svg></div></div><div class="tc"><svg class="tg"><use href="#phong"/></svg></div></div>
          <div class="row"><div class="nc"><i class="g"></i><i class="x minus"></i><svg class="ti"><use href="#boole"/></svg><span class="nm">Tunnel</span><div class="fl"><i class="ed"></i><i class="dots"></i><svg class="st"><use href="#check"/></svg></div></div></div>
          <div class="row"><div class="nc"><i class="g"></i><i class="g"></i><i class="x tee"></i><svg class="ti cy"><use href="#cube"/></svg><span class="nm">Cube</span><div class="fl"><i class="ed"></i><i class="dots"></i><svg class="st"><use href="#check"/></svg></div></div><div class="tc"><svg class="tg"><use href="#phong"/></svg></div></div>
          <div class="row"><div class="nc"><i class="g"></i><i class="g"></i><i class="x corner"></i><svg class="ti cy"><use href="#tube"/></svg><span class="nm">Cylinder</span><div class="fl"><i class="ed"></i><i class="dots"></i><svg class="st"><use href="#check"/></svg></div></div><div class="tc"><svg class="tg"><use href="#phong"/></svg></div></div>
          <div class="row"><div class="nc"><i class="g"></i><i class="x tee"></i><svg class="ti"><use href="#inst"/></svg><span class="nm">Wall Instance</span><div class="fl"><i class="ed"></i><i class="dots"></i><svg class="st"><use href="#check"/></svg></div></div></div>
          <div class="row"><div class="nc"><i class="g"></i><i class="x minus"></i><svg class="ti gn"><use href="#cloner"/></svg><span class="nm">Wall</span><div class="fl"><i class="ed"></i><i class="dots"></i><svg class="st"><use href="#check"/></svg></div></div></div>
          <div class="row"><div class="nc"><i class="g"></i><i class="g"></i><i class="x tee"></i><svg class="ti"><use href="#boole"/></svg><span class="nm"></span><div class="fl"><i class="ed"></i><i class="dots"></i><svg class="st"><use href="#check"/></svg></div></div></div>
        </div>
        <div class="scroll"><i></i></div>
      </div>
    </div>

    <div class="panel attrs">
      <div class="ptabs"><span class="ptab on">Attributes</span><span class="ptab">Layers</span></div>
      <div class="pmenu second">
        <span class="burger"></span>
        <span>Mode</span><span>Edit</span><span>User Data</span>
        <span class="picons"><svg><use href="#left"/></svg><svg class="fade"><use href="#right"/></svg><svg><use href="#up"/></svg><svg><use href="#search"/></svg><svg><use href="#filter"/></svg><svg><use href="#lock"/></svg><svg><use href="#target"/></svg><svg><use href="#pop"/></svg></span>
      </div>
      <div class="obj-head">
        <svg class="pur"><use href="#bend"/></svg>
        <span>Bend Object [Bend]</span>
        <div class="custom"><span>Custom</span><i></i></div>
      </div>
      <div class="atabs"><span>Basic</span><span>Coordinates</span><span class="on">Object</span><span>Fields</span></div>
      <h2>Object Properties</h2>
      <div class="ar"><i class="kf"></i><label>Size</label><div class="fields"><span class="fld">1245.1748</span><span class="fld">4107.7996</span><span class="fld">377.5434 c</span></div></div>
      <div class="ar"><i class="nokf"></i><label>Alignment</label><div class="seg"><span>Auto</span><span>+X</span><span>-X</span><span class="sel-seg">+Y</span><span>-Y</span><span>+Z</span><span>-Z</span></div></div>
      <div class="ar"><span class="fit">Fit to Parent</span></div>
      <div class="ar gapt"><i class="kf"></i><label>Mode</label><div class="seg"><span class="sel-seg lit">Limited</span><span>Within Box</span><span>Unlimited</span></div></div>
      <div class="ar"><i class="kf"></i><label>Strength</label><span class="fld">-30 °</span><div class="slider"><i class="fill s30"></i><i class="knob"></i></div></div>
      <div class="ar"><i class="kf"></i><label>Angle</label><span class="fld">0 °</span><div class="slider"><i class="knob"></i></div></div>
      <div class="ar"><i class="kf"></i><label>Keep Length</label><svg class="cb" viewBox="0 0 12 12"><path d="M2.500 6.500l2.500 2.500 4.500-5.500"/></svg></div>
    </div>
  </section>
</main>

<footer class="status">
  <span class="burger"></span>
  <svg viewBox="0 0 24 24"><circle cx="12" cy="12" r="10"/><path d="M7 12l4 4 7-10"/></svg>
  <span>Bend Object [Bend]</span>
</footer>
<script src="scene.js"></script>
</body>
</html>
```
FILE: styles.css
```css
*{box-sizing:border-box}
html,body{margin:0;padding:0}
body{width:3440px;height:1392px;overflow:hidden;display:flex;flex-direction:column;background:#2d2d2d;color:#a9a9a9;font:12px/16px Roboto,"Noto Sans CJK KR",sans-serif}
svg{fill:none;stroke:currentColor;stroke-width:1.5;display:block}
i,em{font-style:normal}
.defs{position:absolute}

.titlebar{height:23px;background:#0078d4;color:#fff;display:flex;align-items:center;padding-left:3px;font:12px/16px "Noto Sans","Noto Sans CJK KR",sans-serif;letter-spacing:-.2px}
.applogo{width:15px;height:15px;stroke:none;margin-right:6px}
.winbtns{margin-left:auto;display:flex;gap:30px;padding-right:18px;color:#fff}
.winbtns svg{width:14px;height:14px;stroke-width:1.1}

.tabbar{height:25px;background:#1c1c1c;display:flex;align-items:center;padding-left:10px;position:relative}
.hist{width:14px;height:14px;color:#a0a0a0;margin-right:10px}
.hist.dim{color:#555;margin-right:15px}
.hist.home{margin-right:11px;overflow:visible}
.doc-tab{align-self:stretch;width:77px;background:#2d2d2d;color:#c6c6c6;display:flex;align-items:center;justify-content:space-between;padding:0 9px 0 7px}
.doc-tab em{color:#bbb}
.add-tab{color:#c0c0c0;font-size:17px;font-weight:700;margin-left:10px}
.layouts{margin-left:auto;display:flex;padding-right:45px;align-self:stretch}
.lay{padding:0 19.900px;display:flex;align-items:center;color:#8e8e8e;font-size:11.500px}
.lay.on{color:#e0e0e0}
.lay.it{font-style:italic}
.kebab{position:absolute;right:19px;top:5px;width:4px;height:16px;background:radial-gradient(circle,#999 2px,transparent 2.300px) 0 0/4px 6px}

.menubar{height:24px;display:flex;align-items:center;padding-left:8px;gap:13.500px;font-size:11.500px;letter-spacing:-.1px}
.hl{color:#d6dc84}

.workspace{flex:1;display:flex;min-height:0}
.center{width:2975px;display:flex;flex-direction:column}
.side{flex:1;display:flex;flex-direction:column;padding-top:5px;min-width:0}

.toolbar{height:34px;display:flex;align-items:flex-start;padding:5px 3px 0 45px;gap:10px}
.tb-mid{margin-left:auto;display:flex;gap:11px}
.tb-right{margin-left:auto;display:flex;gap:11px}
.g-gap{margin-left:9px}
.grp{display:flex;background:#3b3b3b;border-radius:5px;height:28px;overflow:hidden}
.grp.off{opacity:.55}
.b{width:28px;height:28px;display:flex;align-items:center;justify-content:center;color:#a8a8a8;position:relative;border-left:1px solid #333}
.b:first-child{border-left:0}
.b svg{width:18px;height:20px}
.b.on{background:#50559b;color:#d8d8d8;margin:1px 0;height:26px}
.tri::after{content:"";position:absolute;right:1px;bottom:1px;border:3px solid transparent;border-right-color:#9a9a9a;border-bottom-color:#9a9a9a}
.axis{flex-direction:column;gap:1px}
.axis b{font-weight:400;font-size:14px;line-height:16px;color:#a8a8a8}
.axis i{width:15px;height:2px}
.ax-x{background:#e0413f}
.ax-y{background:#45c96a}
.ax-z{background:#2e80e8}
.axis2{flex-direction:column}
.axis2 b{font-weight:400;font-size:11px;line-height:13px;color:#d8d8d8}
.axis2 i{width:18px;height:6px;background:repeating-linear-gradient(90deg,#ddd 0 3px,transparent 3px 4px)}

.vp-row{flex:1;display:flex;min-height:0;height:1175px}
.palette{width:38px;padding-left:1px;display:flex;flex-direction:column;gap:10px;flex:none}
.pg{width:36px;background:#3b3b3b;border-radius:5px;display:flex;flex-direction:column;overflow:hidden;flex:none}
.p{height:35.800px;display:flex;align-items:center;justify-content:center;color:#a8a8a8;position:relative;border-top:1px solid #2d2d2d}
.p:first-child{border-top:0}
.p svg{width:24px;height:24px}
.p.on{background:#50559b}
.palette.right{width:43px;padding-left:5px}
.gap4{margin-top:-6px}
.gap5{margin-top:-5px}
.gap11{margin-top:1px}
.gap21{margin-top:11px}
.dimg{opacity:.5}
.lav{color:#cfdcf8}
.sky{color:#6fc8f3}
.cy{color:#86d3f5}
.grn,.gn{color:#62d07c}
.pur{color:#8d8fe6}
.pnk{color:#e196dd}
.lt{color:#c8d4ea}

.viewcol{width:2894px;display:flex;flex-direction:column;flex:none}
.vp-menu{height:24px;border-top:1px solid #171717;display:flex;align-items:center;padding-left:6px;gap:13.500px;font-size:11.500px;letter-spacing:-.1px;flex:none}
.burger{width:14px;height:11px;flex:none;background:repeating-linear-gradient(180deg,#999 0 2px,transparent 2px 4.500px);margin-right:-4px}
.burger.wh{background:repeating-linear-gradient(180deg,#eee 0 2px,transparent 2px 4.500px)}
.vp-nav{margin-left:auto;display:flex;gap:4px;padding-right:1px;color:#aaa}
.vp-nav svg{width:16px;height:18px}
.viewport{position:relative;flex:1;overflow:hidden;border-bottom:2px solid #7d7d7d}
.scene{width:2894px;height:1151px;stroke:none}
.horizon{stroke:#333;stroke-width:1;stroke-dasharray:16 16}
.edge{fill:none;stroke:#111;stroke-width:1.200;vector-effect:non-scaling-stroke}
.steps{fill:none;stroke:#3c3c3c;stroke-width:3;vector-effect:non-scaling-stroke}
.col{fill:#8b8b8b;stroke:#0c0c0c;stroke-width:1;vector-effect:non-scaling-stroke}
.col2{fill:#8a8a8a}
.sel{fill:none;stroke:#f7a033;stroke-width:1.400;vector-effect:non-scaling-stroke}
.thin-g{fill:none;stroke:#3fd672;stroke-width:1.300;vector-effect:non-scaling-stroke}
.band{fill:#000;fill-opacity:.2}
.mini-y{stroke:#3fd672;stroke-width:1.200}
.mini-x{stroke:#e0413f;stroke-width:1.200}
.mini-z{stroke:#3a7fe0;stroke-width:1.200}
.hud{position:absolute;background:rgba(110,110,110,.5);color:#e6e6e6;border-radius:3px;height:16px;line-height:16px;padding:0 2px;font-size:11.500px;display:flex;align-items:center;gap:8px;white-space:nowrap}
.hud svg{width:13px;height:13px;stroke-width:1.500}
.hud-persp{left:3px;top:0}
.hud-cam{left:1398px;top:1px;gap:3px}
.hud-move{left:3px;top:375px;width:54px}
.hud-trans{left:3px;top:1132px}
.hud-grid{left:2762px;top:1133px}

.dialog{position:absolute;left:1496px;top:489px;width:390px;height:209px;border-radius:8px;overflow:hidden;background:#fff;color:#000;box-shadow:0 6px 22px rgba(0,0,0,.4)}
.dlg-head{height:30px;background:#f3f3f3;color:#9a9a9a;display:flex;align-items:center;justify-content:space-between;padding:0 10px 0 8px;font:12px/16px "Noto Sans",sans-serif}
.dlg-head svg{width:11px;height:11px;color:#777;stroke-width:1}
.dlg-body{height:137px;padding:22px 10px 0 11px;font:12px/13px "Noto Sans CJK KR","Noto Sans",sans-serif;letter-spacing:-.25px}
.dlg-body p{margin:0 0 13px}
.dlg-foot{height:42px;background:#f3f3f3;display:flex;justify-content:flex-end;padding:10px 17px 0 0}
.dlg-btn{width:72px;height:21px;background:#fdfdfd;border:1px solid #cfcfcf;border-radius:4px;text-align:center;line-height:19px;font-family:"Noto Sans CJK KR",sans-serif}

.timeline{height:87px;display:flex;flex-direction:column;flex:none}
.tl-controls{height:39px;padding:10px 43px 0 45px;display:flex;align-items:flex-start;background:radial-gradient(circle,#4a4a4a .6px,transparent .9px) 40px 2px/3px 3px repeat-x}
.tl-mid{margin:0 auto;display:flex;gap:11px}
.frame{width:75px;height:18px;background:#1a1a1a;border-radius:4px;color:#ccc;text-align:center;line-height:18px;font-size:11px;margin-top:5px;flex:none}
.frame.small{margin-top:0;color:#ddd}
.ruler{height:25px;display:flex;padding-left:19.250px;position:relative;font-size:11.500px;color:#8e8e8e;background:
  linear-gradient(#3a3a3a,#3a3a3a) 46px 18px/2890px 1px no-repeat,
  repeating-linear-gradient(90deg,#999 0 1px,transparent 1px 79.500px) 59px 20px/2862px 4px no-repeat,
  repeating-linear-gradient(90deg,#888 0 1px,transparent 1px 79.500px) 98.750px 20px/2800px 2px no-repeat}
.ruler span{width:79.500px;text-align:center;flex:none;height:16px}
.head{position:absolute;left:55px;top:1px;width:9px;height:16px;background:#666ab5}
.mark{position:absolute;top:0;width:1px;height:24px;background:#c8c8c8}
.m0{left:59px;top:17px;height:7px}
.m24{left:1013px}
.m48{left:1967px}
.m72{left:2921px}
.range{display:flex;padding:1px 40px 0 46px;gap:8px;height:21px}
.range-bar{flex:1;background:#3e3e3e;border-radius:3px;height:17px;display:flex;justify-content:space-between;align-items:center;padding:0 18px 0 15px;color:#ddd;font-size:11px}
.range .frame{height:18px}

.panel{background:#2d2d2d;border-left:1px solid #1d1d1d}
.ptabs{height:23px;background:#1c1c1c;display:flex;align-items:stretch;font-size:12.500px}
.ptab{display:flex;align-items:center;color:#8e8e8e;padding:0 13px}
.ptab.on{background:#2d2d2d;color:#e2e2e2}
.attrs .ptabs{height:24px}
.pmenu{height:23px;display:flex;align-items:center;padding-left:5px;gap:13.500px;border-bottom:1px solid #222;font-size:11.500px;letter-spacing:-.05px}
.picons{margin-left:auto;display:flex;gap:4px;padding-right:3px;color:#999}
.picons svg{width:16px;height:16px;overflow:visible}
.picons .fade{color:#444}
.objects{height:575px;display:flex;flex-direction:column;flex:none}
.tree{flex:1;display:flex;min-height:0;overflow:hidden;border-bottom:1px solid #1d1d1d}
.rows{width:449px;flex:none;padding-top:1px}
.scroll{flex:1;padding:0 5px;background:#2d2d2d}
.scroll i{display:block;width:4px;height:446px;background:#3c3c3c;border-radius:2px;margin-top:1px}
.row{height:20px;display:flex;background:#2d2d2d}
.row:nth-child(odd){background:#262626}
.nc{width:188px;flex:none;display:flex;align-items:center;padding-left:2px;border-right:2px solid #202020;height:20px}
.g{width:12px;height:20px;flex:none;position:relative}
.g::before,.x::before{content:"";position:absolute;left:5px;top:0;bottom:0;border-left:1px solid #4e4e4e}
.x{width:12px;height:20px;flex:none;position:relative}
.x::after{content:"";position:absolute;left:5px;top:10px;width:9px;border-top:1px solid #4e4e4e}
.corner::before{bottom:10px}
.minus{background:linear-gradient(#8a8a8a,#8a8a8a) 2px 10px/7px 1px no-repeat}
.plus{background:linear-gradient(#8a8a8a,#8a8a8a) 2px 10px/7px 1px no-repeat,linear-gradient(#8a8a8a,#8a8a8a) 5px 7px/1px 7px no-repeat}
.minus::after,.plus::after{left:1px;top:6px;width:9px;height:9px;border:1px solid #757575}
.ti{width:16px;height:16px;flex:none;margin-left:2px;overflow:visible}
.nm{flex:1;margin-left:4px;color:#a8a8a8;letter-spacing:.1px;white-space:nowrap}
.or{color:#c46a16}
.ye{color:#efc120}
.fl{width:45px;display:flex;align-items:center;flex:none;height:20px}
.ed{width:10px;height:10px;background:linear-gradient(135deg,#666 0 42%,#2a2a2a 43% 55%,#666 56%);border-radius:2px;margin-left:2px;flex:none}
.dots{width:6px;height:16px;margin-left:6px;flex:none;background:radial-gradient(circle at 3px 3px,#565656 3px,transparent 3.200px),radial-gradient(circle at 3px 13px,#565656 3px,transparent 3.200px)}
.dots.red{background:radial-gradient(circle at 3px 3px,#e2504e 3px,transparent 3.200px),radial-gradient(circle at 3px 13px,#e2504e 3px,transparent 3.200px)}
.st{width:13px;height:13px;flex:none;margin-left:4px;overflow:visible}
.tc{flex:1;display:flex;align-items:center;padding-left:3px;gap:4px}
.tg{width:16px;height:16px;flex:none;overflow:visible}
.boxed{background:#222;box-shadow:0 0 0 2px #222;border-radius:2px}
.t-half{width:12px;height:12px;border-radius:50%;margin-left:2px;background:linear-gradient(90deg,#0aa8ea 50%,#1d1d1d 50%);box-shadow:0 0 0 1px #0aa8ea}

.attrs{flex:1}
.pmenu.second{height:22px}
.obj-head{height:18px;margin-top:6px;display:flex;align-items:center;padding-left:9px;color:#a8a8a8}
.obj-head svg{width:16px;height:16px;margin-right:8px;overflow:visible}
.custom{margin-left:auto;margin-right:7px;width:102px;height:18px;border-radius:9px;background:#3b3b3b;display:flex;align-items:center;padding:0 0 0 7px;color:#aaa;position:relative}
.custom i{position:absolute;right:0;top:0;width:20px;height:18px;border-left:1px solid #2d2d2d}
.custom i::after{content:"";position:absolute;left:5px;top:7px;border:4px solid transparent;border-top-color:#aaa}
.atabs{margin-top:5px;height:19px;display:flex;gap:4px;padding-left:7px}
.atabs span{background:#3b3b3b;border-radius:5px;padding:0 8px;display:flex;align-items:center;color:#a8a8a8}
.atabs .on{background:#50559b;color:#e2e2e2}
h2{margin:7px 0 5px 8px;font-size:13px;font-weight:400;color:#e0e0e0;line-height:16px;height:16px}
.ar{height:22px;display:flex;align-items:center;padding-left:9px}
.kf{width:9px;height:9px;flex:none;transform:rotate(45deg);border:1.500px solid #999;margin:0 1px}
.nokf{width:11px;flex:none}
.ar label{width:69px;margin-left:9px;flex:none;color:#9c9c9c;white-space:nowrap}
.fields{display:flex;gap:6px}
.fld{width:75px;height:18px;background:#191919;border-radius:4px;text-align:center;line-height:18px;color:#c6c6c6;flex:none}
.seg{width:356px;height:18px;display:flex;background:#3b3b3b;border-radius:3px;overflow:hidden;flex:none}
.seg span{flex:1;text-align:center;line-height:18px;border-left:1px solid #2d2d2d;color:#aaa}
.seg span:first-child{border-left:0}
.seg .sel-seg{background:#5c5c5c;color:#e6e6e6}
.fit{margin-left:13px;width:83px;height:20px;border-radius:10px;background:#3b3b3b;color:#d0d0d0;text-align:center;line-height:20px}
.gapt{margin-top:2px}
.slider{position:relative;width:277px;height:4px;background:#1a1a1a;border-radius:2px;margin:-1px 0 0 4px;flex:none}
.fill{position:absolute;left:0;top:0;height:4px;background:#50559b;border-radius:2px}
.s30{width:127px}
.knob{position:absolute;left:0;top:-5px;width:4px;height:11px;background:#a8a8a8;border-radius:2px}
.s30 + .knob{left:125px}
.cb{width:12px;height:12px;background:#50559b;border-radius:2px;stroke:#fff;stroke-width:1.500}

.status{height:25px;background:#1c1c1c;display:flex;align-items:center;padding-left:5px;gap:9px;font-size:11.500px;color:#aaa;flex:none}
.status svg{width:15px;height:15px;color:#888}
.status .burger{margin-right:0}
```
FILE: scene.js
```js
// Perspective floor grid and the stripes on the bent planes.
(function () {
  var NS = 'http://www.w3.org/2000/svg';
  function add(parent, d, attrs) {
    var p = document.createElementNS(NS, 'path');
    p.setAttribute('d', d);
    p.setAttribute('fill', 'none');
    p.setAttribute('vector-effect', 'non-scaling-stroke');
    Object.keys(attrs).forEach(function (k) { p.setAttribute(k, attrs[k]); });
    parent.appendChild(p);
  }
  var HOR = 545, BASE = 1281;
  function family(vx, x0, dx, from, to) {
    var out = { minor: '', major: '' };
    for (var k = from; k <= to; k++) {
      var bx = x0 + k * dx;
      // extend the line well past the base so it leaves the picture
      var ex = vx + (bx - vx) * 1.5, ey = HOR + (BASE - HOR) * 1.5;
      var s = 'M' + vx + ' ' + HOR + 'L' + ex.toFixed(1) + ' ' + ey.toFixed(1);
      if (k % 5 === 0) out.major += s; else out.minor += s;
    }
    return out;
  }
  var grid = document.getElementById('grid');
  var a = family(2380, 277, 545, -300, 300);
  var b = family(-2200, 625, 1153, -12, 300);
  [a, b].forEach(function (f) {
    add(grid, f.minor, { stroke: 'url(#fade)', 'stroke-width': 1 });
    add(grid, f.major, { stroke: 'url(#fade-dark)', 'stroke-width': 1 });
  });

  function stripes(id, y0, y1, sTop, sBot, slope, w) {
    var d = '', y = y0;
    while (y < y1) {
      var l = y - slope * 1000, r = y + slope * 1000;
      d += 'M-200 ' + l.toFixed(1) + 'L1800 ' + r.toFixed(1);
      y += sTop + (sBot - sTop) * (y - y0) / (y1 - y0);
    }
    add(document.getElementById(id), d, { stroke: '#111', 'stroke-width': w });
  }
  stripes('stripes-a', 60, 1000, 3.600, 17, .18, 1.2);
  stripes('stripes-b', 300, 1550, 14, 36, .24, 1.2);
})();
```
